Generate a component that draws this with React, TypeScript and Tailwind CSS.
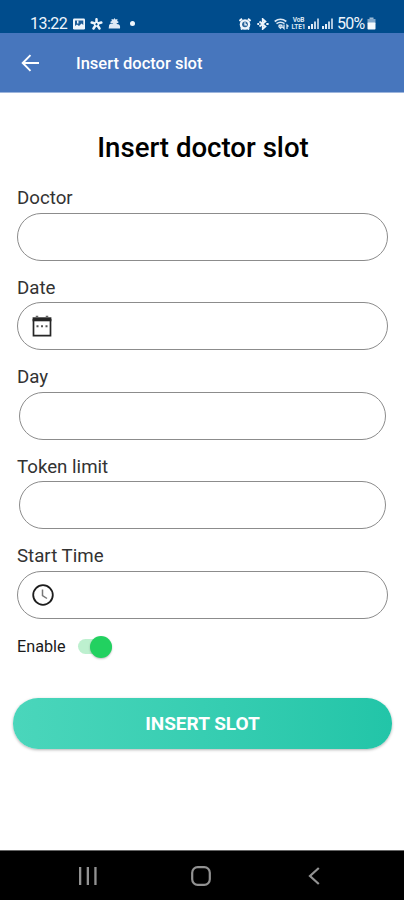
import React from "react";

function Signal() {
  return (
    <svg width="12" height="11" viewBox="0 0 12 11" fill="#e4eef8">
      <rect x="0" y="8" width="2" height="3" />
      <rect x="3" y="6" width="2" height="5" />
      <rect x="6" y="3.5" width="2" height="7.5" opacity=".85" />
      <rect x="9" y="0.5" width="2" height="10.5" opacity=".75" />
    </svg>
  );
}

function StatusBar() {
  return (
    <div className="flex h-[33px] items-end bg-[#004c8c] pr-7 pl-[30px] text-[#eef5fc]">
      <div className="flex h-[19px] flex-1 items-center">
        <span className="w-[43px] pt-px text-[16px] tracking-[-0.5px]">13:22</span>
        <svg width="12" height="12" viewBox="0 0 12 12">
          <rect x="0" y="0.5" width="12" height="11" rx="1.2" fill="#eef5fc" />
          <path d="M2 2.500h8.300v4.500L8.500 5.500 6 8 4 6.500 2 8z" fill="#1d5d98" />
          <path d="M4 2.500h1.500v3H4z" fill="#eef5fc" />
        </svg>
        <svg width="13" height="12" viewBox="0 0 13 12" className="ml-[5px]" stroke="#eef5fc" strokeWidth="2.500" strokeLinecap="round">
          <path d="M6.500 1.200v2.500M1.700 4.500l2.600.8M11.300 4.500l-2.600.8M3.500 10.500l1.500-2.200M9.500 10.500L8 8.300" />
          <circle cx="6.500" cy="6.200" r="1.900" strokeWidth="1.400" fill="none" />
        </svg>
        <svg width="13" height="11" viewBox="0 0 13 11" className="ml-[5px]" fill="#dfeaf6">
          <path d="M6.500 0l1 1.500 2-.5-.3 2 1.600 1-1 1H3L2 4l1.800-1-.3-2 2 .5z" />
          <path d="M1 8c0-2 2-3 3-2.300C6 4 9 4.500 9.500 6.300 11.500 6 12.500 8 12 10.500H.7z" />
        </svg>
        <span className="ml-[9px] h-[5px] w-[5px] rounded-full bg-[#eef5fc]" />
      </div>
      <div className="flex h-[19px] items-center">
        <svg width="12" height="12" viewBox="0 0 12 12" fill="none">
          <circle cx="6" cy="6.500" r="5.300" fill="#eef5fc" />
          <path d="M.5 3L3 .8M11.500 3L9 .8M2 11.500l1-1M10 11.500l-1-1" stroke="#eef5fc" strokeWidth="2" />
          <circle cx="6" cy="6.300" r="2.900" fill="#2a659b" />
          <path d="M6 4.300v2.500h2" stroke="#eef5fc" strokeWidth="1.300" />
        </svg>
        <svg width="12" height="12" viewBox="0 0 12 12" className="ml-[6px]" fill="none" stroke="#eef5fc" strokeWidth="1.700">
          <path d="M2.500 3.500l6 5L5.700 11V1l2.800 2.500-6 5" />
          <path d="M.3 6h1.900M9.300 6h2.300" strokeWidth="2.200" />
        </svg>
        <svg width="16" height="12" viewBox="0 0 16 12" className="ml-[5px]" fill="none" stroke="#dce8f4" strokeWidth="1.600">
          <path d="M.7 3.500Q6.500-1 12.300 3.500M2.500 5.700q4-3 8 0M4.500 7.700q2-1.500 4 0" />
          <path d="M5.300 9L6.500 10.300 7.700 9zM10 6.500v4l-1.500-1.500M13 11V7l1.500 1.500" strokeWidth="1.300" />
        </svg>
        <span className="ml-px flex w-[15px] flex-col items-center text-[6.500px] leading-[7px] font-bold tracking-[-0.1px] text-[#dce8f4]">
          <span>VoB</span>
          <span>LTE1</span>
        </span>
        <span className="ml-[2px] flex gap-[2px]">
          <Signal />
          <Signal />
        </span>
        <span className="ml-[3px] w-[28px] pt-px text-[16px] tracking-[-0.8px]">50%</span>
        <svg width="9" height="13" viewBox="0 0 9 13" className="ml-[2px]">
          <rect x="2.500" y="0.500" width="4" height="2" fill="#9dbbd6" />
          <rect x="0.500" y="2" width="8" height="4" fill="#7fa6ca" />
          <rect x="0.500" y="5.500" width="8" height="7" rx="0.800" fill="#f4f9fd" />
        </svg>
      </div>
    </div>
  );
}

function CalendarIcon() {
  return (
    <svg width="20" height="22" viewBox="0 0 20 22" fill="none" stroke="#262626">
      <path d="M1.500 4v16.700h17V4" strokeWidth="1.700" />
      <path d="M.6 4.300h18.800" strokeWidth="4" />
      <path d="M5 .8v2M15 .8v2" strokeWidth="2.500" stroke="#666" />
      <path d="M4.500 11.300h2M9 11.300h2M13.500 11.300h2" strokeWidth="2" stroke="#555" />
    </svg>
  );
}

function ClockIcon() {
  return (
    <svg width="22" height="22" viewBox="0 0 22 22" fill="none">
      <circle cx="11" cy="11" r="9.800" stroke="#1d1d1d" strokeWidth="1.800" />
      <path d="M10.500 5.500V11.500l4.500 3" stroke="#777" strokeWidth="1.500" />
    </svg>
  );
}

type FieldProps = { label: string; inset?: boolean; icon?: React.ReactNode };

function Field({ label, inset, icon }: FieldProps) {
  return (
    <div className="h-[89.500px]">
      <div className="h-[26.500px] pl-[17px] text-[18.700px] leading-[24px] text-[#333]">{label}</div>
      <div
        className={
          (inset ? "mr-[18px] ml-[19px] " : "mr-4 ml-[17px] ") +
          "flex h-12 items-center rounded-full border border-[#8c8c8c] pl-[14px]"
        }
      >
        {icon}
      </div>
    </div>
  );
}

export default function App() {
  return (
    <div className="flex h-[900px] w-[404px] flex-col overflow-hidden bg-white font-[Roboto,sans-serif] whitespace-nowrap">
      <StatusBar />
      <header className="flex h-[60px] items-center border-b border-[#9db5dc] bg-[#4776bd] pl-[21px] text-white">
        <svg width="19" height="18" viewBox="0 0 19 18" fill="none" stroke="#fff" strokeWidth="1.900">
          <path d="M18 9H2M9.500 1.200L1.700 9l7.800 7.800" />
        </svg>
        <span className="ml-[36px] pt-[3px] text-[16.500px] font-medium">Insert doctor slot</span>
      </header>
      <main className="flex flex-1 flex-col">
        <h1 className="mt-[37px] pl-[2px] text-center text-[27.600px] leading-9 font-medium text-black">Insert doctor slot</h1>
        <div className="mt-[20px]">
          <Field label="Doctor" />
          <Field label="Date" icon={<CalendarIcon />} />
          <Field label="Day" inset />
          <Field label="Token limit" inset />
          <Field label="Start Time" icon={<ClockIcon />} />
        </div>
        <div className="flex h-[26px] items-center pl-[17px]">
          <span className="w-[61px] pt-px text-[16.200px] text-[#1a1a1a]">Enable</span>
          <span className="flex h-[15px] w-[34px] items-center justify-end rounded-full bg-[#bdf0cf]">
            <span className="h-[22px] w-[22px] shrink-0 rounded-full bg-[#22d160] shadow-[0_1px_2px_rgba(0,0,0,0.25)]" />
          </span>
        </div>
        <button className="mt-[38px] mr-3 ml-[13px] h-[51px] rounded-[25px] bg-linear-to-r from-[#4ad6bb] via-[#37ceb2] to-[#22c5a8] pt-[3px] text-[19px] font-bold text-white shadow-[0_1px_3px_rgba(0,0,0,0.3)]">
          INSERT SLOT
        </button>
      </main>
      <nav className="flex h-[50px] items-center border-t border-[#666] bg-black pl-[79px]">
        <svg width="18" height="18" viewBox="0 0 18 18" fill="#929292">
          <path d="M0 0h2.300v18H0zM7.700 0H10v18H7.700zM15.300 0h2.300v18h-2.300z" />
        </svg>
        <svg width="20" height="20" viewBox="0 0 20 20" className="ml-[94px]" fill="none" stroke="#929292" strokeWidth="2.200">
          <rect x="1.200" y="1.200" width="17.600" height="17.600" rx="5.500" />
        </svg>
        <svg width="12" height="18" viewBox="0 0 12 18" className="ml-[97px]" fill="none" stroke="#929292" strokeWidth="2.200">
          <path d="M10.800 1L2 9l8.800 8" />
        </svg>
      </nav>
    </div>
  );
}
